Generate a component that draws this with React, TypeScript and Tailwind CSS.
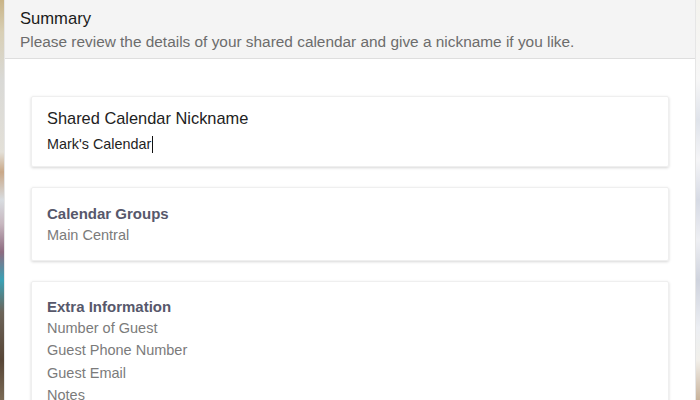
export default function App() {
  return (
    <div className="flex h-[400px] w-[700px] overflow-hidden bg-white font-['Liberation_Sans',Arial,sans-serif]">
      {/* blurred desktop behind the sheet */}
      <div className="w-[4px] shrink-0 bg-[linear-gradient(to_bottom,#c9b487_0%,#d8cfb5_8%,#d9d9d6_20%,#e3e0d8_38%,#c9a888_43%,#d8dce0_50%,#c7b7bf_56%,#8d6b80_63%,#3aa1b5_70%,#6c6459_78%,#574536_90%,#7a6a55_100%)]" />

      <div className="flex min-w-0 flex-1 flex-col border-x border-[#e6e6e6]">
        {/* header */}
        <div className="h-[59px] shrink-0 border-b border-[#dedede] bg-[#f4f4f4] px-[15px] pt-[8px]">
          <div className="text-[16.6px] leading-[22px] text-[#1b1b1b]">Summary</div>
          <div className="mt-[2px] text-[15.4px] leading-[20px] text-[#6c6c6c]">
            Please review the details of your shared calendar and give a nickname if you like.
          </div>
        </div>

        {/* body */}
        <div className="flex flex-col gap-[20px] px-[26px] pt-[37px]">
          <div className="rounded-[2px] border border-[#efefef] px-[15px] pb-[12px] pt-[10px] shadow-[0_1px_3px_rgba(0,0,0,0.16)]">
            <div className="text-[16.4px] leading-[22px] text-[#222]">Shared Calendar Nickname</div>
            <div className="mt-[5px] flex items-center text-[14.4px] leading-[20px] text-[#1f1f1f]">
              Mark's Calendar
              <span className="ml-[1px] inline-block h-[17px] w-[1px] bg-[#111]" />
            </div>
          </div>

          <div className="rounded-[2px] border border-[#efefef] px-[15px] pb-[15px] pt-[16px] shadow-[0_1px_3px_rgba(0,0,0,0.16)]">
            <div className="text-[15px] font-bold leading-[20px] text-[#57586b]">Calendar Groups</div>
            <div className="mt-[1px] text-[14.5px] leading-[20px] text-[#7b7b7b]">Main Central</div>
          </div>

          <div className="rounded-[2px] border border-[#efefef] px-[15px] pb-[15px] pt-[15px] shadow-[0_1px_3px_rgba(0,0,0,0.16)]">
            <div className="text-[15px] font-bold leading-[20px] text-[#57586b]">Extra Information</div>
            <div className="text-[14.5px] leading-[22.3px] text-[#7b7b7b]">
              <div>Number of Guest</div>
              <div>Guest Phone Number</div>
              <div>Guest Email</div>
              <div>Notes</div>
            </div>
          </div>
        </div>
      </div>

      <div className="w-[4px] shrink-0 bg-[linear-gradient(to_bottom,#f4f3ee_0%,#f7f7f7_20%,#dfe3ea_30%,#f5f5f7_40%,#d6dae4_50%,#eeeff3_60%,#cfd3dd_70%,#eceef2_82%,#f2efea_90%,#c9b29a_100%)]" />
    </div>
  );
}
